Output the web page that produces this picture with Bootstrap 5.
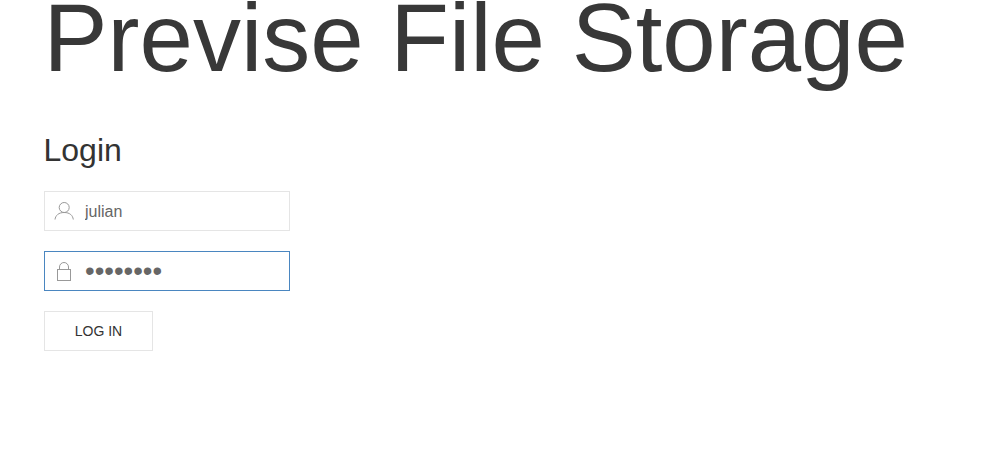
<!DOCTYPE html>
<html lang="en"><head><meta charset="utf-8">
<link rel="stylesheet" href="https://cdn.jsdelivr.net/npm/bootstrap@5.3.0/dist/css/bootstrap.min.css">
<style>
html,body{height:472px;overflow:hidden;background:#fff}
body{font-family:"Liberation Sans",Arial,sans-serif}
.page-wrap{padding:0 44px}
.site-title{font-family:"Liberation Sans",Arial,sans-serif;font-size:96px;line-height:105px;font-weight:400;color:#383838;margin:-15px 0 0 -.5px;white-space:nowrap}
.login-title{font-size:32px;line-height:36px;font-weight:400;color:#333;margin:42px 0 23px -.5px}
.field{width:246px;height:40px;border:1px solid #e5e5e5;margin-bottom:20px;color:#666;font-size:16px;padding-left:9px;gap:10px}
.field.active-field{border-color:#4a86c0}
.field input{border:0;outline:0;padding:1px 0 0;flex:1;min-width:0;color:#666;font-size:16px;font-family:inherit;background:transparent}
.field input[type=password]{font-size:27.500px;line-height:30px;height:30px;padding:0}
.icon-box{width:21px;flex:none}
.login-btn{width:109px;height:40px;border:1px solid #e5e5e5;border-radius:0;background:#fff;font-size:14px;color:#333;padding:0}
</style></head><body>
<div class="page-wrap">
<h1 class="site-title">Previse File Storage</h1>
<h2 class="login-title">Login</h2>
<form>
<div class="field d-flex align-items-center">
<svg class="icon-box" width="21" height="21" viewBox="0 0 21 21" fill="none" stroke="#999"><circle cx="10.200" cy="6.500" r="5"/><path d="M1 18.500c.5-4 3.500-7 9.200-7s8.600 3 9.100 7"/></svg>
<input type="text" value="julian" aria-label="Username">
</div>
<div class="field active-field d-flex align-items-center">
<svg class="icon-box" width="21" height="21" viewBox="0 0 21 21" fill="none" stroke="#999"><rect x="3.500" y="8.500" width="13" height="11"/><path d="M5.500 8.500V6a4.500 4.500 0 0 1 9 0v2.500"/></svg>
<input type="password" value="password" aria-label="Password">
</div>
<button type="button" class="btn login-btn">LOG IN</button>
</form>
</div>
</body></html>
